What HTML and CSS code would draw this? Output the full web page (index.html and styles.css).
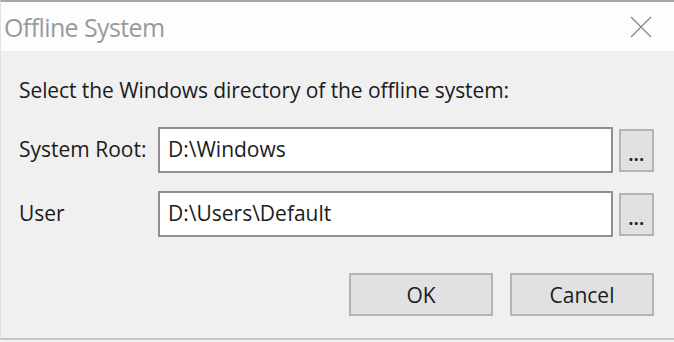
FILE: index.html
```html
<!DOCTYPE html>
<html lang="en">
<head>
    <meta charset="UTF-8">
    <title>Offline System</title>
    <link rel="stylesheet" href="styles.css">
</head>
<body>
    <div class="window">
        <div class="titlebar">
            <span class="title">Offline System</span>
            <svg class="close" width="22" height="22" viewBox="0 0 22 22">
                <path d="M1 1 L21 21 M21 1 L1 21" stroke="#8a8a8a" stroke-width="1.4" fill="none"/>
            </svg>
        </div>

        <div class="content">
            <div class="prompt">Select the Windows directory of the offline system:</div>

            <div class="fields">
                <label class="label">System Root:</label>
                <div class="input">D:\Windows</div>
                <button class="browse">...</button>

                <label class="label">User</label>
                <div class="input">D:\Users\Default</div>
                <button class="browse">...</button>
            </div>

            <div class="actions">
                <button class="btn">OK</button>
                <button class="btn">Cancel</button>
            </div>
        </div>
    </div>
</body>
</html>
```

FILE: styles.css
```css
html, body {
    margin: 0;
    padding: 0;
    background: #f4f4f4;
}
body {
    font-family: "Open Sans", "Noto Sans", sans-serif;
    color: #1b1b1b;
}
.window {
    width: 674px;
    height: 340px;
    box-sizing: border-box;
    border-top: 2px solid #a8a8a8;
    border-bottom: 2px solid #c4c4c4;
    border-left: 1px solid #e2e2e2;
    background: #f0f0f0;
    display: flex;
    flex-direction: column;
}
.titlebar {
    height: 49px;
    background: #fdfdfd;
    display: flex;
    align-items: center;
    justify-content: space-between;
    padding: 0 22px 0 3px;
}
.title {
    font-size: 25px;
    color: #9a9a9a;
    letter-spacing: -0.6px;
}
.close {
    display: block;
}
.content {
    flex: 1;
    padding: 27px 20px 0 18px;
    font-size: 21px;
}
.prompt {
    line-height: 24px;
    margin-bottom: 25px;
    letter-spacing: -0.08px;
}
.fields {
    display: grid;
    grid-template-columns: 133px 1fr 35px;
    column-gap: 6px;
    row-gap: 18px;
    align-items: center;
}
.label {
    line-height: 24px;
    margin-top: -3px;
}
.input {
    height: 46px;
    box-sizing: border-box;
    border: 2px solid #8f8f8f;
    background: #ffffff;
    padding: 0 8px 3px;
    display: flex;
    align-items: center;
}
.browse {
    height: 43px;
    box-sizing: border-box;
    border: 2px solid #b4b4b4;
    background: #e1e1e1;
    font-family: inherit;
    font-size: 17px;
    font-weight: bold;
    color: #222;
    padding: 8px 0 0;
    letter-spacing: 0.5px;
}
.actions {
    display: flex;
    justify-content: flex-end;
    gap: 17px;
    margin-top: 36px;
}
.btn {
    width: 144px;
    height: 43px;
    box-sizing: border-box;
    border: 2px solid #b4b4b4;
    background: #e1e1e1;
    font-family: inherit;
    font-size: 21px;
    color: #1b1b1b;
}
```
